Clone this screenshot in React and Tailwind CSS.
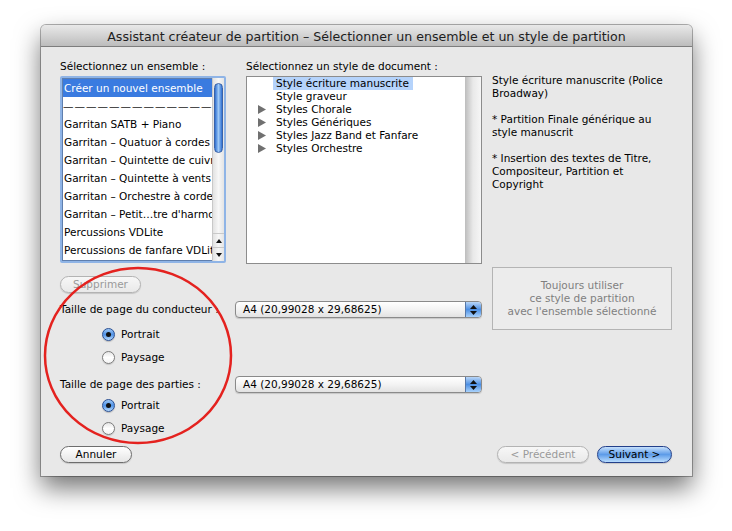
import React from 'react';

const ensembles = [
    'Garritan SATB + Piano',
    'Garritan – Quatuor à cordes',
    'Garritan – Quintette de cuivres',
    'Garritan – Quintette à vents',
    'Garritan – Orchestre à cordes',
    'Garritan – Petit…tre d\'harmonie',
    'Percussions VDLite',
    'Percussions de fanfare VDLite',
];

const styles = [
    { name: 'Style écriture manuscrite', folder: false, selected: true },
    { name: 'Style graveur', folder: false },
    { name: 'Styles Chorale', folder: true },
    { name: 'Styles Génériques', folder: true },
    { name: 'Styles Jazz Band et Fanfare', folder: true },
    { name: 'Styles Orchestre', folder: true },
];

const Radio = ({ checked, label }) => (
    <div className="h-[23px] flex items-center pl-[42px]">
        {checked ? (
            <span className="w-[13px] h-[13px] rounded-full border border-[#2a4f93] bg-gradient-to-b from-[#9cc7f5] via-[#4f92e6] to-[#b6dafd] flex items-center justify-center shadow-[0_1px_1px_rgba(0,0,0,0.2)]">
                <span className="w-[5px] h-[5px] rounded-full bg-[#111]" />
            </span>
        ) : (
            <span className="w-[13px] h-[13px] rounded-full border border-[#7c7c7c] bg-gradient-to-b from-[#e6e6e6] via-[#ffffff] to-[#f4f4f4] shadow-[0_1px_1px_rgba(0,0,0,0.15)]" />
        )}
        <span className="ml-[6px]">{label}</span>
    </div>
);

const Popup = () => (
    <div className="w-[247px] h-[17px] rounded-[4px] border border-[#8a8a8a] bg-gradient-to-b from-[#ffffff] via-[#f3f3f3] to-[#e2e2e2] flex items-center shadow-[0_1px_1px_rgba(0,0,0,0.15)] overflow-hidden">
        <span className="flex-1 pl-[7px]">A4 (20,99028 x 29,68625)</span>
        <span className="w-[16px] h-full bg-gradient-to-b from-[#b9d6f7] via-[#4c8fe3] to-[#a9d2fb] border-l border-[#5678a8] flex flex-col items-center justify-center gap-[2px]">
            <svg width="7" height="4" viewBox="0 0 7 4"><path d="M3.5 0L7 4H0z" fill="#111" /></svg>
            <svg width="7" height="4" viewBox="0 0 7 4"><path d="M0 0h7L3.5 4z" fill="#111" /></svg>
        </span>
    </div>
);

const PillButton = ({ children, className = '', disabled, primary }) => (
    <div
        className={`h-[17px] rounded-full flex items-center justify-center ${primary
            ? 'border border-[#223f8a] bg-gradient-to-b from-[#c6e0fb] via-[#5d9be8] to-[#b8dcfd] text-black'
            : disabled
                ? 'border border-[#b3b3b3] bg-gradient-to-b from-[#f7f7f7] to-[#e9e9e9] text-[#9a9a9a]'
                : 'border border-[#6d6d6d] bg-gradient-to-b from-[#ffffff] via-[#f2f2f2] to-[#e6e6e6] text-black'
            } shadow-[0_1px_1px_rgba(0,0,0,0.15)] ${className}`}
    >
        {children}
    </div>
);

export default function App() {
    return (
        <div className="relative w-[732px] h-[531px] bg-white pt-[25px] pl-[41px] font-['DejaVu_Sans',sans-serif] text-[10.5px] leading-[13px] text-black overflow-hidden">
            <div className="w-[651px] h-[451px] bg-[#e8e8e8] rounded-t-[5px] shadow-[0_0_0_1px_rgba(0,0,0,0.3),0_12px_26px_rgba(0,0,0,0.55)] flex flex-col overflow-hidden">
                {/* title bar */}
                <div className="h-[22px] shrink-0 pt-[1px] bg-gradient-to-b from-[#e9e9e9] via-[#d3d3d3] to-[#bcbcbc] border-b border-[#7d7d7d] flex items-center justify-center text-[12.6px] text-[#1e1e1e]">
                    Assistant créateur de partition – Sélectionner un ensemble et un style de partition
                </div>

                <div className="flex-1 flex flex-col pl-[19px] pr-[20px] pt-[13px]">
                    {/* top area */}
                    <div className="flex">
                        <div className="w-[166px]">
                            <div className="h-[13px]">Sélectionnez un ensemble :</div>
                            <div className="mt-[3px] h-[187px] rounded-[2px] border-[2px] border-[#8fb4e6] bg-white flex overflow-hidden">
                                <div className="flex-1 min-w-0 border border-[#5f7fae] border-r-0">
                                    <div className="h-[18px] bg-[#3a7be0] text-white flex items-center pl-[1px] whitespace-nowrap">Créer un nouvel ensemble</div>
                                    <div className="h-[18px] flex items-center whitespace-nowrap overflow-hidden text-[#222] tracking-[1px]">————————————————</div>
                                    {ensembles.map(e => (
                                        <div key={e} className="h-[18px] flex items-center pl-[1px] whitespace-nowrap overflow-hidden">{e}</div>
                                    ))}
                                </div>
                                <div className="w-[12px] border-l border-[#c8c8c8] bg-gradient-to-r from-[#e2e2e2] via-[#f7f7f7] to-[#e4e4e4] flex flex-col">
                                    <div className="mt-[5px] mx-[1px] h-[70px] rounded-full border border-[#3a62a7] bg-gradient-to-r from-[#2f6fd0] via-[#9ec9f6] to-[#2f6fd0]" />
                                    <div className="flex-1" />
                                    <div className="h-[14px] flex items-center justify-center border-t border-[#c9c9c9]">
                                        <svg width="6" height="4" viewBox="0 0 6 4"><path d="M3 0L6 4H0z" fill="#111" /></svg>
                                    </div>
                                    <div className="h-[14px] flex items-center justify-center border-t border-[#c9c9c9]">
                                        <svg width="6" height="4" viewBox="0 0 6 4"><path d="M0 0h6L3 4z" fill="#111" /></svg>
                                    </div>
                                </div>
                            </div>
                        </div>

                        <div className="w-[236px] ml-[20px]">
                            <div className="h-[13px]">Sélectionnez un style de document :</div>
                            <div className="mt-[3px] h-[188px] border border-[#8c8c8c] bg-white flex">
                                <div className="flex-1">
                                    {styles.map(s => (
                                        <div key={s.name} className="h-[13px] flex items-center">
                                            <span className="w-[29px] flex justify-end pr-[10px]">
                                                {s.folder && (
                                                    <svg width="8" height="9" viewBox="0 0 8 9"><path d="M0 0L8 4.5 0 9z" fill="#707070" /></svg>
                                                )}
                                            </span>
                                            <span className={s.selected ? 'bg-[#b5d3fb] pl-[3px] -ml-[3px] pr-[4px]' : ''}>{s.name}</span>
                                        </div>
                                    ))}
                                </div>
                                <div className="w-[16px] bg-gradient-to-r from-[#bdbdbd] via-[#e9e9e9] to-[#f6f6f6]" />
                            </div>
                        </div>

                        <div className="flex-1 ml-[10px] pt-[14px] flex flex-col gap-[13px]">
                            <p>Style écriture manuscrite (Police Broadway)</p>
                            <p>* Partition Finale générique au style manuscrit</p>
                            <p>* Insertion des textes de Titre, Compositeur, Partition et Copyright</p>
                        </div>
                    </div>

                    {/* lower area */}
                    <div className="flex">
                        <div className="w-[422px]">
                            <PillButton disabled className="mt-[12px] w-[81px]">Supprimer</PillButton>
                            <div className="mt-[8px] flex items-center">
                                <span className="w-[175px] whitespace-nowrap">Taille de page du conducteur :</span>
                                <Popup />
                            </div>
                            <div className="mt-[5px]">
                                <Radio checked label="Portrait" />
                                <Radio label="Paysage" />
                            </div>
                            <div className="mt-[7px] flex items-center">
                                <span className="w-[175px] whitespace-nowrap">Taille de page des parties :</span>
                                <Popup />
                            </div>
                            <div className="mt-[1px]">
                                <Radio checked label="Portrait" />
                                <Radio label="Paysage" />
                            </div>
                        </div>
                        <div className="ml-[10px] mt-[3px] w-[180px] h-[63px] border border-[#b4b4b4] bg-[#ececec] flex flex-col items-center justify-center text-center text-[#7f7f7f]">
                            <span>Toujours utiliser</span>
                            <span>ce style de partition</span>
                            <span>avec l'ensemble sélectionné</span>
                        </div>
                    </div>

                    {/* bottom buttons */}
                    <div className="mt-auto mb-[13px] flex items-center">
                        <PillButton className="w-[72px]">Annuler</PillButton>
                        <div className="flex-1" />
                        <PillButton disabled className="w-[92px]">&lt; Précédent</PillButton>
                        <PillButton primary className="w-[75px] ml-[8px]">Suivant &gt;</PillButton>
                    </div>
                </div>
            </div>

            {/* red annotation */}
            <svg className="absolute left-[42px] top-[266px]" width="192" height="180" viewBox="0 0 192 180">
                <ellipse cx="96" cy="89.5" rx="93" ry="87.5" fill="none" stroke="#e4221f" strokeWidth="2.5" />
            </svg>
        </div>
    );
}
